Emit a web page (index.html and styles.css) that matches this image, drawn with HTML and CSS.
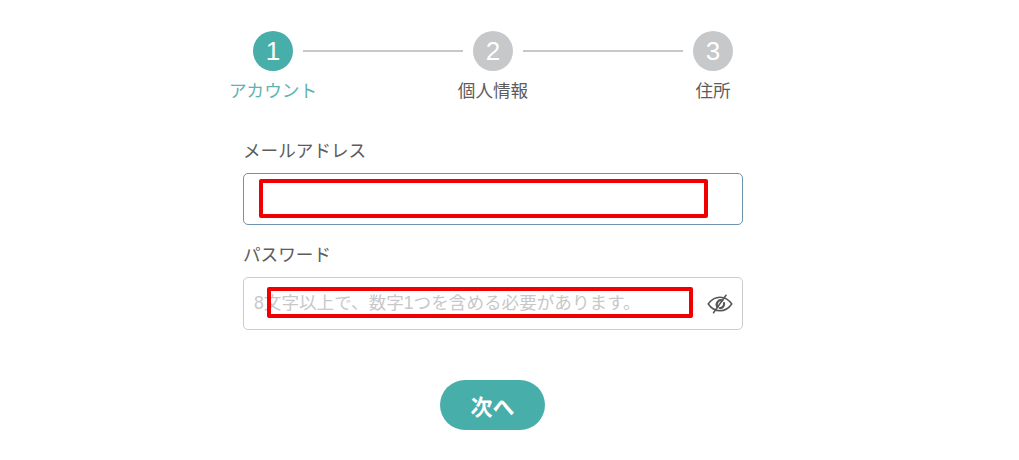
FILE: index.html
```html
<!DOCTYPE html>
<html lang="ja">
<head>
    <meta charset="UTF-8">
    <title>アカウント登録</title>
    <link rel="stylesheet" href="styles.css">
</head>
<body>
    <div class="content">
        <div class="stepper">
            <div class="step active">
                <div class="step-num">1</div>
                <div class="step-label">アカウント</div>
            </div>
            <div class="step-line"></div>
            <div class="step">
                <div class="step-num">2</div>
                <div class="step-label">個人情報</div>
            </div>
            <div class="step-line"></div>
            <div class="step">
                <div class="step-num">3</div>
                <div class="step-label">住所</div>
            </div>
        </div>

        <form class="form">
            <div class="field field-email">
                <label for="email">メールアドレス</label>
                <div class="input-box focused">
                    <input id="email" type="text">
                    <div class="redact redact-email"></div>
                </div>
            </div>
            <div class="field field-password">
                <label for="password">パスワード</label>
                <div class="input-box">
                    <input id="password" type="text" placeholder="8文字以上で、数字1つを含める必要があります。">
                    <svg class="eye" viewBox="0 0 26 20" width="26" height="20" fill="none" stroke="#555" stroke-width="1.5" stroke-linecap="round" stroke-linejoin="round">
                        <path d="M1.2 10C4.500 5.300 8.500 3.200 13 3.200S21.500 5.300 24.800 10C21.500 14.700 17.500 16.800 13 16.800S4.500 14.700 1.200 10Z"/>
                        <path d="M10.600 13.200A4.300 4.300 0 0 1 15.400 6.500" stroke-width="2.200"/>
                        <path d="M17 9A4.300 4.300 0 0 1 13 14.200" stroke-width="2.200"/>
                        <path d="M6.500 18.800L19 1.200"/>
                    </svg>
                    <div class="redact redact-password"></div>
                </div>
            </div>
            <div class="actions">
                <button type="button" class="next">次へ</button>
            </div>
        </form>
    </div>
</body>
</html>
```

FILE: styles.css
```css
body {
    margin: 0;
    background-color: #fff;
    color: #5c5c5c;
    font-family: "Liberation Sans", "Noto Sans CJK JP", sans-serif;
    font-size: 17.6px;
    overflow: hidden;
}
.content {
    width: 500px;
    margin-left: 243px;
    padding-top: 31px;
}
.stepper {
    display: flex;
    align-items: flex-start;
    margin-left: 10px;
}
.step {
    width: 40px;
    display: flex;
    flex-direction: column;
    align-items: center;
    flex-shrink: 0;
}
.step-num {
    width: 40px;
    height: 40px;
    line-height: 40px;
    border-radius: 50%;
    background-color: #c6c8ca;
    color: #fff;
    font-size: 26px;
    text-align: center;
}
.step-label {
    margin-top: 7px;
    line-height: 26px;
    white-space: nowrap;
}
.step.active .step-num {
    background-color: #48aea9;
}
.step.active .step-label {
    color: #5fb3af;
}
.step-line {
    width: 160px;
    height: 2px;
    margin: 19px 10px 0;
    background-color: #c6c8ca;
}
.form {
    margin-top: 34px;
}
.field label {
    display: block;
    line-height: 26px;
    margin-bottom: 9px;
}
.field-password {
    margin-top: 17px;
}
.input-box {
    position: relative;
    display: flex;
    align-items: center;
    height: 52px;
    box-sizing: border-box;
    border: 1px solid #ccc;
    border-radius: 5px;
    padding: 0 9px 0 10px;
}
.field-password .input-box {
    height: 53px;
}
.input-box.focused {
    border-color: #6f93ad;
}
.input-box input {
    flex: 1;
    min-width: 0;
    border: 0;
    outline: 0;
    padding: 0;
    background: transparent;
    color: #555;
    font-family: inherit;
    font-size: inherit;
}
.input-box input::placeholder {
    color: #c8c8c8;
    opacity: 1;
}
.eye {
    flex-shrink: 0;
}
/* red boxes drawn over the screenshot */
.redact {
    position: absolute;
    box-sizing: border-box;
    border: 4px solid #f00000;
    border-radius: 2px;
}
.redact-email {
    left: 15px;
    top: 5px;
    width: 449px;
    height: 39px;
}
.redact-password {
    left: 23px;
    top: 9px;
    width: 426px;
    height: 31px;
}
.actions {
    display: flex;
    justify-content: center;
    margin-top: 50px;
    padding-right: 1px;
}
.next {
    width: 105px;
    height: 50px;
    border: 0;
    border-radius: 25px;
    background-color: #48aea9;
    color: #fff;
    font-family: inherit;
    font-size: 22px;
    font-weight: bold;
    cursor: pointer;
}
```
